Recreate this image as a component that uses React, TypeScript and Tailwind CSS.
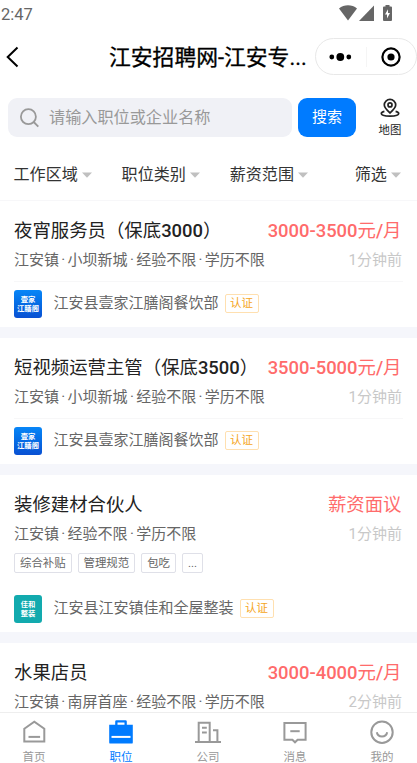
import type { ReactNode } from "react";

type Job = {
  title: string;
  salary: string;
  meta: string[];
  time: string;
  tags?: string[];
  company?: string;
  logo?: { lines: string[]; className: string };
};

const yijia = {
  lines: ["壹家", "江膳阁"],
  className: "bg-gradient-to-b from-[#0886f7] to-[#0a50d2]",
};

const jobs: Job[] = [
  {
    title: "夜宵服务员（保底3000）",
    salary: "3000-3500元/月",
    meta: ["江安镇", "小坝新城", "经验不限", "学历不限"],
    time: "1分钟前",
    company: "江安县壹家江膳阁餐饮部",
    logo: yijia,
  },
  {
    title: "短视频运营主管（保底3500）",
    salary: "3500-5000元/月",
    meta: ["江安镇", "小坝新城", "经验不限", "学历不限"],
    time: "1分钟前",
    company: "江安县壹家江膳阁餐饮部",
    logo: yijia,
  },
  {
    title: "装修建材合伙人",
    salary: "薪资面议",
    meta: ["江安镇", "经验不限", "学历不限"],
    time: "1分钟前",
    tags: ["综合补贴", "管理规范", "包吃", "..."],
    company: "江安县江安镇佳和全屋整装",
    logo: { lines: ["佳和", "整装"], className: "bg-[#12aaae]" },
  },
  {
    title: "水果店员",
    salary: "3000-4000元/月",
    meta: ["江安镇", "南屏首座", "经验不限", "学历不限"],
    time: "2分钟前",
  },
];

// Digits are drawn in medium weight, Chinese characters in regular
function Mixed({ text }: { text: string }) {
  return text.split(/([0-9/-]+)/).map((part, i) => (
    <span key={i} className={i % 2 ? "font-medium" : "font-normal"}>
      {part}
    </span>
  ));
}

function StatusBar() {
  return (
    <div className="flex h-7 shrink-0 items-center justify-between pl-px pr-[25px] text-[#666]">
      <span className="pt-px text-[16.5px] leading-7">2:47</span>
      <div className="-mt-0.5 flex items-start">
        <svg width="18" height="16" viewBox="0 0 18 16" fill="currentColor">
          <path d="M0 3.4C5 -.7 13 -.7 18 3.4L9 15.6z" />
        </svg>
        <svg className="ml-0.5" width="15" height="16" viewBox="0 0 15 16" fill="currentColor">
          <path d="M15 .6V16H0z" />
        </svg>
        <svg className="ml-[9px]" width="9" height="16" viewBox="0 0 9 16">
          <path d="M2.5 0h4v1.6H8q1 0 1 1V15q0 1-1 1H1q-1 0-1-1V2.6q0-1 1-1h1.5z" fill="currentColor" />
          <path d="M5 4.2 2 9.4h2v4l3-5.4H5z" fill="#fff" />
        </svg>
      </div>
    </div>
  );
}

function NavBar() {
  return (
    <header className="flex h-[58px] shrink-0 items-center">
      <svg className="ml-[6px]" width="13" height="22" viewBox="0 0 13 22" fill="none" stroke="#000" strokeWidth="2">
        <path d="M11.5 1.5 1.7 11l9.8 9.5" />
      </svg>
      <h1 className="ml-[90px] w-[206px] whitespace-nowrap pt-0.5 text-[21.8px] leading-8 text-black [-webkit-text-stroke:0.3px_#000]">
        江安招聘网-江安专...
      </h1>
      <div className="-mt-px flex h-[37px] w-[102px] shrink-0 items-center rounded-full border border-[#e8e8e8]">
        <div className="flex flex-1 justify-center border-r border-[#f5f5f5]">
          <svg width="23" height="20" viewBox="0 0 23 20">
            <circle cx="2.8" cy="10" r="2.4" />
            <circle cx="11.3" cy="10" r="3.9" />
            <circle cx="19.8" cy="10" r="2.4" />
          </svg>
        </div>
        <div className="flex flex-1 justify-center">
          <svg width="20" height="20" viewBox="0 0 20 20">
            <circle cx="10" cy="10" r="8.6" fill="none" stroke="#000" strokeWidth="2.2" />
            <circle cx="10" cy="10" r="3.6" />
          </svg>
        </div>
      </div>
    </header>
  );
}

function SearchRow() {
  return (
    <div className="flex h-[63px] shrink-0 items-start pl-2 pt-3">
      <div className="flex h-[39px] w-[284px] items-center rounded-[9px] bg-[#f0f1f6] pl-3">
        <svg width="19" height="20" viewBox="0 0 19 20" fill="none" stroke="#999" strokeWidth="1.8">
          <circle cx="8.4" cy="8.7" r="7.5" />
          <path d="m13.7 14 4.6 4.6" />
        </svg>
        <span className="ml-[10px] text-[16.15px] leading-6 text-[#999]">请输入职位或企业名称</span>
      </div>
      <button className="ml-[6px] h-[39px] w-[58px] rounded-[9px] bg-[#007bff] text-[15px] text-white">搜索</button>
      <div className="ml-[22px] flex w-6 flex-col items-center">
        <svg width="20" height="20" viewBox="0 0 20 20" fill="none" stroke="#222" strokeWidth="1.7">
          <path d="M10 15C7 12.200 4.300 9.800 4.300 7a5.700 5.600 0 0 1 11.400 0c0 2.800-2.700 5.200-5.700 8z" />
          <circle cx="10" cy="6.900" r="2" />
          <path d="M4.400 13.300C2.300 13.800 1.300 14.500 1.300 15.500c0 1.600 3.500 2.600 8.700 2.600s8.700-1 8.700-2.600c0-1-1-1.700-3.100-2.200" />
        </svg>
        <span className="mt-1 whitespace-nowrap text-[11.4px] leading-4 text-[#222]">地图</span>
      </div>
    </div>
  );
}

function Filters() {
  return (
    <div className="flex h-[52px] shrink-0 justify-between pl-[13.5px] pr-4">
      {["工作区域", "职位类别", "薪资范围", "筛选"].map((name) => (
        <div key={name} className="flex items-center text-[16.1px] leading-6 text-[#333] last:ml-[17px]">
          {name}
          <svg className="ml-1" width="10" height="6" viewBox="0 0 10 6" fill="#c0c0c0">
            <path d="M0 .5h10L5 5.800z" />
          </svg>
        </div>
      ))}
    </div>
  );
}

function JobCard({ job }: { job: Job }) {
  return (
    <article className="mb-[11px] bg-white px-[14px] pt-4">
      <div className="flex h-7 items-center justify-between whitespace-nowrap text-[18.4px] leading-7">
        <h2 className="text-[#222]">
          <Mixed text={job.title} />
        </h2>
        <span className="mr-[1.5px] text-[#ff6b6b]">
          <Mixed text={job.salary} />
        </span>
      </div>
      <div className="mt-1 flex h-[22px] items-center justify-between text-[15px] leading-[22px]">
        <div className="flex text-[#666]">
          {job.meta.map((item, i) => (
            <span key={item} className="flex">
              {i > 0 && <span className="w-[8.6px] text-center">·</span>}
              {item}
            </span>
          ))}
        </div>
        <span className="mr-px text-[#c8c8c8]">{job.time}</span>
      </div>
      {job.tags && (
        <div className="mt-2 flex gap-[6px]">
          {job.tags.map((tag) => (
            <span key={tag} className="h-5 rounded-[2px] border border-[#dfe0e8] px-[5px] text-[11.4px] leading-[18px] text-[#666]">
              {tag}
            </span>
          ))}
        </div>
      )}
      {job.company && job.logo && (
        <div className={`${job.tags ? "mt-[13px] border-transparent" : "mt-[10px] border-[#f7f7f8]"} flex h-[46px] items-start border-t pt-2`}>
          <div className={`${job.logo.className} flex size-7 flex-col items-center justify-center rounded-[3px] text-[7.3px] font-bold leading-[9px] text-white`}>
            {job.logo.lines.map((line) => (
              <span key={line} className="whitespace-nowrap">{line}</span>
            ))}
          </div>
          <span className="ml-[11.5px] mt-px text-[15px] leading-6 text-[#666]">{job.company}</span>
          <span className="ml-1.5 mt-1 h-[19px] rounded-[2px] border border-[#ffe0b0] px-[4.5px] text-[11.5px] leading-[17px] text-[#f5a623]">
            认证
          </span>
        </div>
      )}
    </article>
  );
}

function Tab({ label, active, children }: { label: string; active?: boolean; children: ReactNode }) {
  return (
    <div className={`${active ? "text-[#007bff]" : "text-[#999]"} flex w-12 flex-col items-center`}>
      <svg className="shrink-0" width="26" height="26" viewBox="0 0 26 26" fill="none" stroke="currentColor" strokeWidth="2">
        {children}
      </svg>
      <span className="mt-1 text-[11.5px] leading-4">{label}</span>
    </div>
  );
}

function TabBar() {
  return (
    <nav className="flex h-[51px] shrink-0 justify-between border-t border-[#eee] bg-white pl-[10px] pr-[11px] pt-1.5">
      <Tab label="首页">
        <path d="M3.300 9.800 13.300 2.800l10 7V22.500h-20z" />
        <path d="M7.500 17.900h11.600" />
      </Tab>
      <Tab label="职位" active>
        <path d="M1.200 5.700h6V2.600Q7.200 1.200 8.600 1.200h8.800q1.400 0 1.400 1.400v3.100h6v17.700q0 1.200-1.200 1.200H2.400q-1.200 0-1.200-1.200zM9.500 5.700h7V3.500h-7z" fill="currentColor" fillRule="evenodd" stroke="none" />
        <path d="M3.500 17.900h19" stroke="#fff" />
      </Tab>
      <Tab label="公司">
        <path d="M0 22.900h26M3.700 22.300V3.700h11v18.600M7 8.800h4.800M7 13.500h4.800M18 11.300h4.400v11" />
      </Tab>
      <Tab label="消息">
        <path d="M2.400 4.100h21.200v16.700h-8L13 23.300l-2.600-2.500h-8z" />
        <path d="M8.300 12.200h9.400" />
      </Tab>
      <Tab label="我的">
        <circle cx="13" cy="13.200" r="10.700" />
        <path d="M7.800 13.300c1.200 5.700 9.200 5.700 10.400 0" />
      </Tab>
    </nav>
  );
}

export default function App() {
  return (
    <div className="flex h-[763px] w-[417px] flex-col overflow-hidden bg-white font-['Roboto','Noto_Sans_CJK_SC',sans-serif]">
      <StatusBar />
      <NavBar />
      <SearchRow />
      <Filters />
      <main className="min-h-0 flex-1 overflow-hidden bg-[#f5f6fb] shadow-[0_-1px_0_#f7f7f9]">
        {jobs.map((job) => (
          <JobCard key={job.title} job={job} />
        ))}
      </main>
      <TabBar />
    </div>
  );
}
